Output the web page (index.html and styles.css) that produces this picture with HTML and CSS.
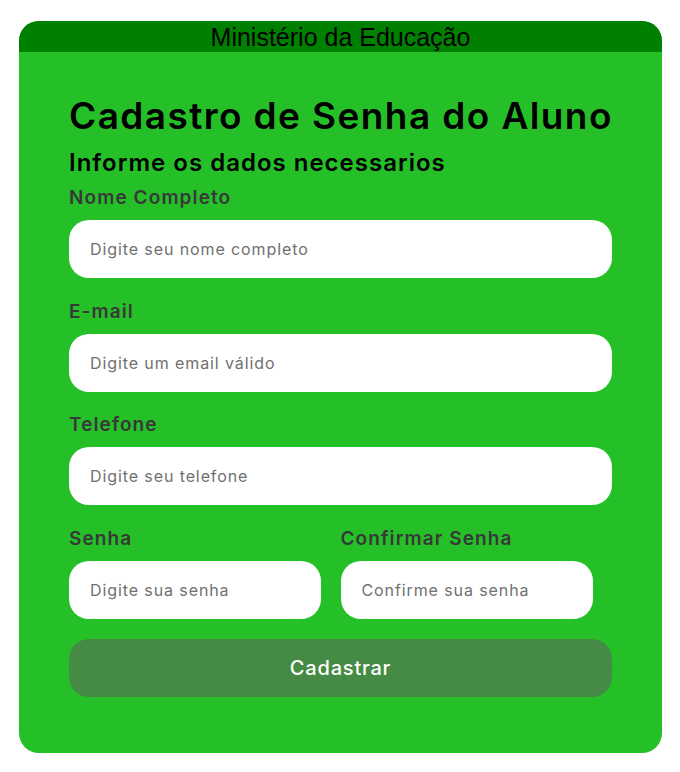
FILE: index.html
```html
<!DOCTYPE html>
<html lang="pt-BR">
<head>
<meta charset="utf-8">
<title>Cadastro de Senha do Aluno</title>
<link rel="stylesheet" href="styles.css">
</head>
<body>
<div class="card">
  <header class="card-header">Ministério da Educação</header>
  <form class="form">
    <h1 class="title">Cadastro de Senha do Aluno</h1>
    <h2 class="subtitle">Informe os dados necessarios</h2>
    <div class="field">
      <label class="label" for="nome">Nome Completo</label>
      <input class="input" id="nome" type="text" placeholder="Digite seu nome completo">
    </div>
    <div class="field">
      <label class="label" for="email">E-mail</label>
      <input class="input" id="email" type="email" placeholder="Digite um email válido">
    </div>
    <div class="field">
      <label class="label" for="tel">Telefone</label>
      <input class="input" id="tel" type="tel" placeholder="Digite seu telefone">
    </div>
    <div class="row">
      <div class="field half">
        <label class="label" for="senha">Senha</label>
        <input class="input" id="senha" type="password" placeholder="Digite sua senha">
      </div>
      <div class="field half">
        <label class="label" for="conf">Confirmar Senha</label>
        <input class="input" id="conf" type="password" placeholder="Confirme sua senha">
      </div>
    </div>
    <button class="button" type="button">Cadastrar</button>
  </form>
</div>
</body>
</html>
```
FILE: styles.css
```css
* { box-sizing: border-box; }
body {
  margin: 0;
  background: #ffffff;
  font-family: "Inter", "Noto Sans", sans-serif;
}
.card {
  margin: 21px 0 0 19px;
  width: 643px;
  height: 732px;
  background: #25c028;
  border-radius: 20px;
  overflow: hidden;
}
.card-header {
  height: 31px;
  background: #008000;
  color: #000;
  font-family: "Liberation Sans", Arial, sans-serif;
  font-size: 25px;
  line-height: 33px;
  text-align: center;
  overflow: visible;
  white-space: nowrap;
}
.form {
  padding: 42px 50px 0 50px;
  display: flex;
  flex-direction: column;
}
.title {
  margin: 0;
  font-size: 37px;
  font-weight: 600;
  letter-spacing: 1.4px;
  line-height: 44px;
  color: #000;
  white-space: nowrap;
}
.subtitle {
  margin: 10px 0 8px 0;
  font-size: 24px;
  font-weight: 600;
  letter-spacing: 1px;
  line-height: 30px;
  color: #000;
  white-space: nowrap;
}
.field {
  display: flex;
  flex-direction: column;
  margin-bottom: 21.6px;
}
.label {
  font-size: 19px;
  font-weight: 600;
  letter-spacing: 1.1px;
  line-height: 24px;
  color: #383838;
  margin-bottom: 10px;
  white-space: nowrap;
}
.input {
  height: 58px;
  width: 100%;
  border: none;
  border-radius: 20px;
  background: #fff;
  padding: 0 21px;
  font-family: inherit;
  font-size: 16px;
  letter-spacing: 0.9px;
  color: #333;
  outline: none;
}
.input::placeholder { color: #707070; }
.row {
  display: flex;
  margin-bottom: -1.4px;
}
.half { flex: 1; }
.half .input { width: 93%; }
.button {
  height: 58px;
  border: none;
  border-radius: 20px;
  background: #468b45;
  color: #fff;
  font-family: inherit;
  font-size: 20px;
  font-weight: 500;
  letter-spacing: 0.8px;
}
```
